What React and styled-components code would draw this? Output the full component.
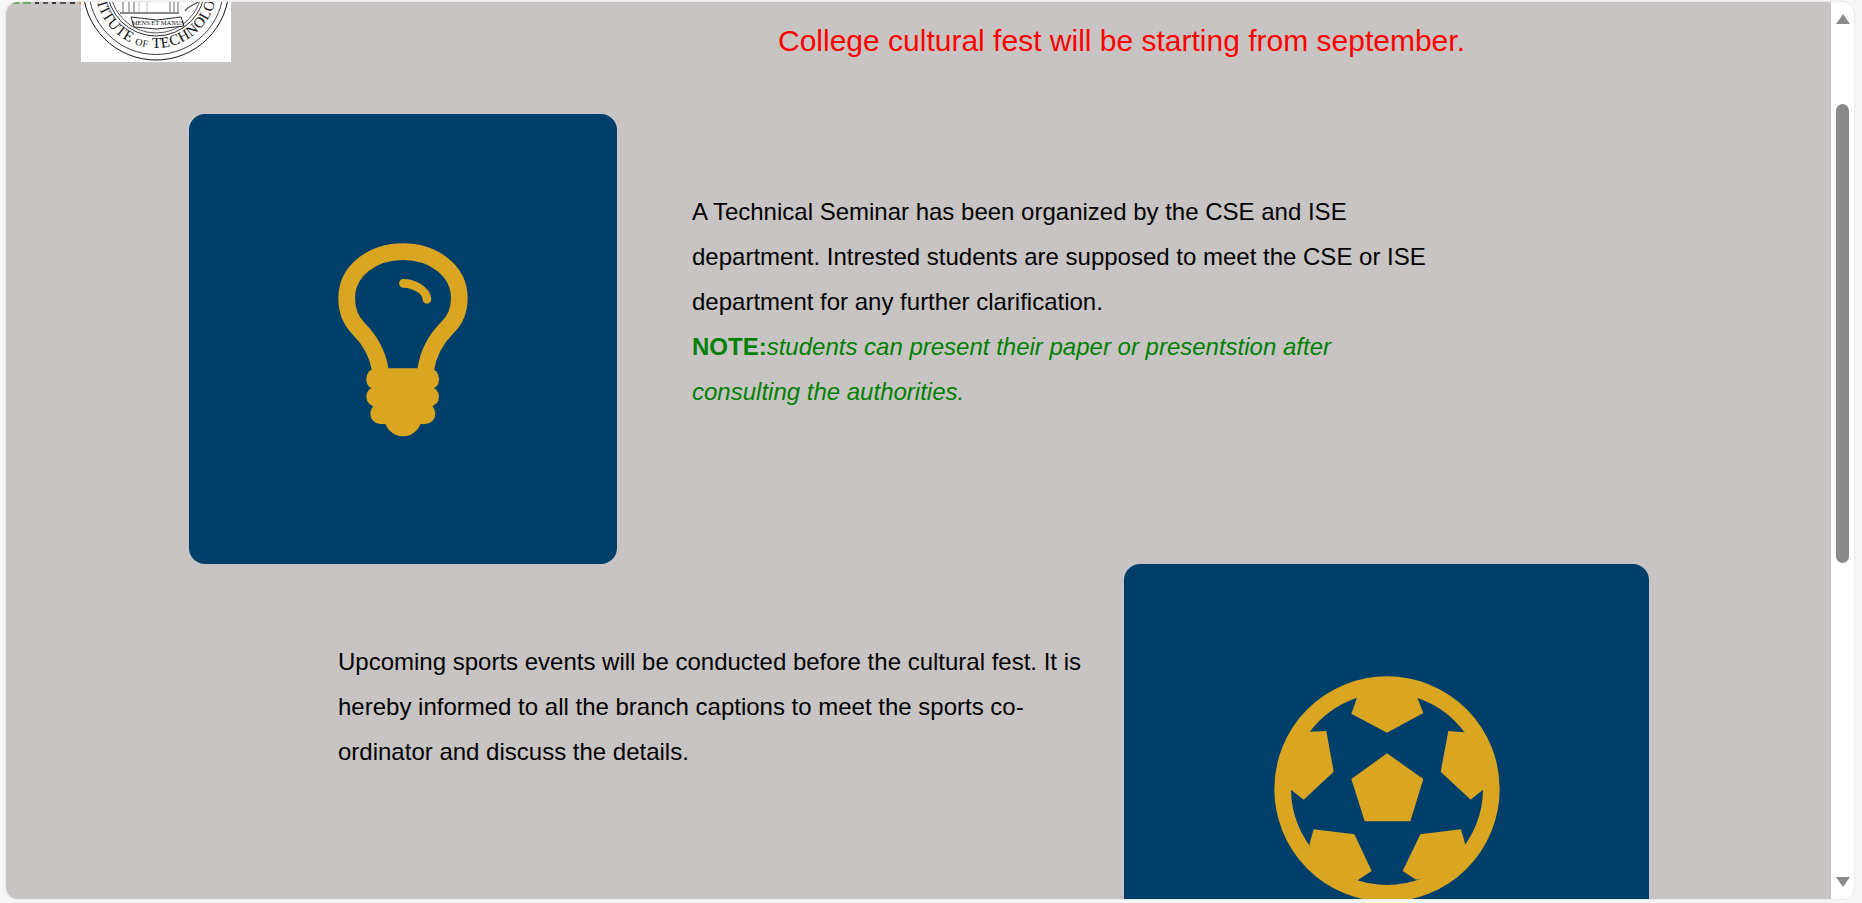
import React from "react";
import styled, { createGlobalStyle } from "styled-components";

const GlobalStyle = createGlobalStyle`
  html, body {
    margin: 0;
    padding: 0;
    height: 100%;
    overflow: hidden;
    background: #f6f6f6;
    font-family: "Liberation Sans", Arial, sans-serif;
  }
`;

const clippedMarks = [
  { w: 7, c: "#6fae5c" },
  { w: 8, c: "#6fae5c" },
  { w: 4, c: "#3a3a3a" },
  { w: 5, c: "#555555" },
  { w: 4, c: "#3a3a3a" },
  { w: 6, c: "#555555" },
  { w: 5, c: "#3a3a3a" },
  { w: 2, c: "#e08a1e" },
];

function Seal() {
  return (
    <LogoSvg viewBox="0 0 150 60">
      <rect width="150" height="60" fill="#ffffff" />
      <g fill="none" stroke="#111">
        <circle cx="75" cy="-15" r="73" strokeWidth="1" />
        <circle cx="75" cy="-15" r="67.5" strokeWidth="0.8" />
        <circle cx="75" cy="-15" r="49" strokeWidth="0.9" />
        <circle cx="75" cy="-15" r="46" strokeWidth="0.7" />
        <path d="M39 11H98" strokeWidth="1.2" />
        <path d="M42 0V10M48 0V10M53 0V10M89 0V10M93 0V10M97 0V10" strokeWidth="1" stroke="#666" />
        <path d="M66 0V10M58 0V10" strokeWidth="0.6" stroke="#999" />
        <path d="M104 9C107 4 113 3 117 0" strokeWidth="1.2" stroke="#444" />
      </g>
      <path d="M50 15L76 18L100 15L103 24L76 27L53 25Z" fill="#fff" stroke="#111" strokeWidth="0.9" />
      <text x="77" y="23" fontSize="6.5" textAnchor="middle" fontFamily="Liberation Serif, serif" fill="#111">
        MENS ET MANUS
      </text>
      <defs>
        <path id="sealArc" d="M14 -15A61 61 0 0 0 136 -15" />
      </defs>
      <text fontSize="15" fontFamily="Liberation Serif, serif" fill="#111" letterSpacing="0.5">
        <textPath href="#sealArc" startOffset="49%" textAnchor="middle">
          INSTITUTE <tspan fontSize="10">OF</tspan> TECHNOLOGY
        </textPath>
      </text>
    </LogoSvg>
  );
}

function Bulb() {
  return (
    <BulbSvg viewBox="-6 -3 630 720">
      <path
        d="M241 450C232 395 205 355 175 325C155 305 140 275 140 235C140 150 220 95 309 95C398 95 478 150 478 235C478 275 462 305 440 325C410 355 385 395 377 450"
        fill="none"
        stroke="#daa520"
        strokeWidth="50"
      />
      <path d="M310 190C340 190 380 210 381 238" fill="none" stroke="#daa520" strokeWidth="26" strokeLinecap="round" />
      <g fill="#daa520">
        <rect x="199" y="445" width="218" height="64" rx="30" />
        <rect x="199" y="500" width="218" height="60" rx="30" />
        <rect x="211" y="550" width="195" height="62" rx="30" />
        <circle cx="309" cy="593" r="56" />
      </g>
    </BulbSvg>
  );
}

function Ball() {
  return (
    <BallSvg viewBox="-12 -62 900 900">
      <circle cx="438" cy="388" r="313" fill="none" stroke="#daa520" strokeWidth="50" />
      <g fill="#daa520">
        <polygon points="347,117 331,162 438,219 547,160 530,117 515,92 438,80 360,92" />
        <polygon points="622,214 670,218 716,260 736,330 726,390 689,420 599,336" />
        <polygon points="207,216 256,214 278,336 188,420 150,390 140,330 160,260" />
        <polygon points="218,509 340,524 392,634 350,662 250,640 205,555" />
        <polygon points="660,509 538,524 485,634 525,660 630,640 673,555" />
        <polygon points="438,281 547,358 508,485 371,485 331,358" />
      </g>
    </BallSvg>
  );
}

export default function App() {
  return (
    <>
      <GlobalStyle />
      <Frame>
        <Panel>
          <Header>
            <ClippedMarks>
              {clippedMarks.map((m, i) => (
                <Mark key={i} $w={m.w} $c={m.c} />
              ))}
            </ClippedMarks>
            <Seal />
            <Notice>College cultural fest will be starting from september.</Notice>
          </Header>

          <SeminarRow>
            <IconCard $w={428}>
              <Bulb />
            </IconCard>
            <Copy $w={750}>
              A Technical Seminar has been organized by the CSE and ISE department. Intrested
              students are supposed to meet the CSE or ISE department for any further clarification.
              <br />
              <Note>
                <b>NOTE:</b>
                <i>students can present their paper or presentstion after consulting the authorities.</i>
              </Note>
            </Copy>
          </SeminarRow>

          <SportsRow>
            <Copy $w={770}>
              Upcoming sports events will be conducted before the cultural fest. It is hereby
              informed to all the branch captions to meet the sports co-ordinator and discuss the
              details.
            </Copy>
            <IconCard $w={525}>
              <Ball />
            </IconCard>
          </SportsRow>
        </Panel>

        <Scrollbar>
          <ArrowUp />
          <Thumb />
          <ArrowDown />
        </Scrollbar>
      </Frame>
    </>
  );
}

const Frame = styled.div`
  box-sizing: border-box;
  display: flex;
  width: 1848px;
  height: 897px;
  margin: 2px 0 0 6px;
  background: #ffffff;
  border-radius: 12px;
  overflow: hidden;
  box-shadow: 0 0 2px rgba(0, 0, 0, 0.18);
`;

const Panel = styled.main`
  flex: 1;
  min-width: 0;
  height: 100%;
  overflow: hidden;
  background: #c8c4c4;
`;

const Header = styled.header`
  position: relative;
  display: flex;
  align-items: flex-start;
  height: 60px;
  padding-left: 75px;
`;

const ClippedMarks = styled.div`
  position: absolute;
  top: 0;
  left: 6px;
  display: flex;
  gap: 4px;
  height: 2px;
`;

const Mark = styled.span`
  width: ${(p) => p.$w}px;
  height: 2px;
  background: ${(p) => p.$c};
`;

const LogoSvg = styled.svg`
  flex: none;
  width: 150px;
  height: 60px;
`;

const Notice = styled.h2`
  margin: 20px 0 0 547px;
  font-size: 30px;
  line-height: 38px;
  font-weight: 400;
  color: #ff0000;
  white-space: nowrap;
`;

const SeminarRow = styled.section`
  display: flex;
  align-items: flex-start;
  gap: 75px;
  margin-top: 52px;
  padding-left: 183px;
`;

const SportsRow = styled.section`
  display: flex;
  align-items: flex-start;
  gap: 16px;
  padding-left: 332px;
`;

const IconCard = styled.div`
  flex: none;
  display: flex;
  align-items: center;
  justify-content: center;
  width: ${(p) => p.$w}px;
  height: 450px;
  background: #003f69;
  border-radius: 16px;
`;

const Copy = styled.p`
  flex: none;
  box-sizing: border-box;
  width: ${(p) => p.$w}px;
  margin: 0;
  padding-top: 75px;
  font-size: 24px;
  line-height: 45px;
  color: #000000;
`;

const Note = styled.span`
  color: #008000;
`;

const BulbSvg = styled.svg`
  width: 210px;
  height: 240px;
`;

const BallSvg = styled.svg`
  width: 300px;
  height: 300px;
`;

const Scrollbar = styled.aside`
  flex: none;
  box-sizing: border-box;
  display: flex;
  flex-direction: column;
  align-items: center;
  width: 23px;
  padding: 12px 0 12px;
  background: #ffffff;
`;

const ArrowUp = styled.div`
  width: 0;
  height: 0;
  border-left: 7px solid transparent;
  border-right: 7px solid transparent;
  border-bottom: 10px solid #8a8a8a;
`;

const ArrowDown = styled.div`
  width: 0;
  height: 0;
  margin-top: auto;
  border-left: 7px solid transparent;
  border-right: 7px solid transparent;
  border-top: 10px solid #8a8a8a;
`;

const Thumb = styled.div`
  width: 13px;
  height: 459px;
  margin-top: 80px;
  background: #8a8a8a;
  border-radius: 7px;
`;
